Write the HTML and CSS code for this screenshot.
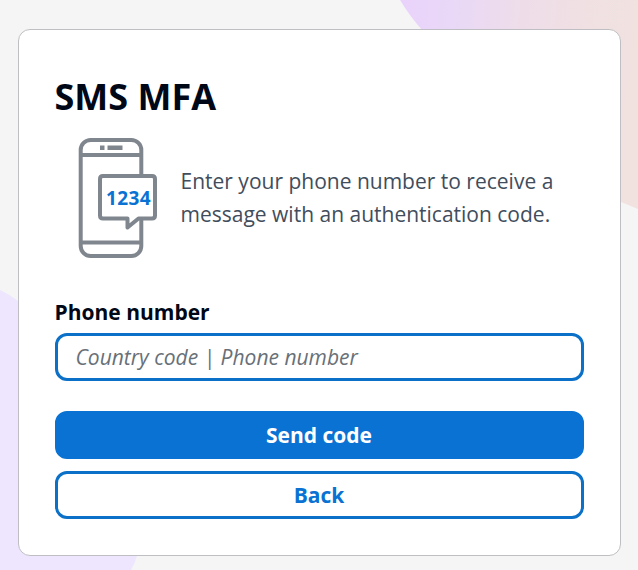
FILE: index.html
```html
<!DOCTYPE html>
<html lang="en">
<head>
<meta charset="utf-8">
<title>SMS MFA</title>
<link rel="stylesheet" href="styles.css">
</head>
<body>
<svg class="backdrop" viewBox="0 0 638 570" aria-hidden="true">
  <defs>
    <linearGradient id="glow" gradientUnits="userSpaceOnUse" x1="405" y1="0" x2="638" y2="20">
      <stop offset="0" stop-color="#ead3fb"/>
      <stop offset=".2" stop-color="#e9d8f7"/>
      <stop offset=".5" stop-color="#eedde9"/>
      <stop offset=".75" stop-color="#f0e0e3"/>
      <stop offset="1" stop-color="#f1e2e0"/>
    </linearGradient>
  </defs>
  <path fill="url(#glow)" d="M400 0Q409 15 422 30Q510 150 621 202L638 209V0Z"/>
  <path fill="#eee6fe" d="M0 290Q9 294 18 301C110 360 164 460 137 556Q135 563 131 570H0Z"/>
</svg>
<main class="card">
  <h1 class="title">SMS MFA</h1>
  <div class="intro">
    <svg class="phone" viewBox="0 0 80 122" aria-hidden="true">
      <g fill="none" stroke="#80868e" stroke-width="4" stroke-linejoin="round">
        <rect x="2.700" y="3" width="60.600" height="116" rx="10"/>
        <path d="M3 18H63M3 105.500H63"/>
        <path fill="#fff" d="M25 39H74Q77 39 77 42V78.500Q77 81.500 74 81.500H60.500L49.500 90.500V81.500H25Q22 81.500 22 78.500V42Q22 39 25 39Z"/>
      </g>
      <path fill="#80868e" d="M22 8.500H26.500V13H22ZM29.500 8.500H44.500V13H29.500Z"/>
      <text class="digits" x="28" y="67.500">1234</text>
    </svg>
    <p class="copy">Enter your phone number to receive a message with an authentication code.</p>
  </div>
  <label class="label" for="phone">Phone number</label>
  <input class="field" id="phone" type="tel" placeholder="Country code | Phone number">
  <button class="button primary" type="button">Send code</button>
  <button class="button" type="button">Back</button>
</main>
</body>
</html>
```
FILE: styles.css
```css
* { box-sizing: border-box; }
body {
  margin: 0;
  height: 570px;
  padding: 29px 17px 0 18px;
  overflow: hidden;
  background: #f5f5f5;
  font-family: "Open Sans", "Noto Sans", sans-serif;
  color: #000716;
}
.backdrop {
  position: absolute;
  inset: 0;
  width: 638px;
  height: 570px;
  z-index: -1;
}
.card {
  display: flex;
  flex-direction: column;
  height: 527px;
  padding: 42px 36px 0;
  background: #fff;
  border: 1px solid #bfbfc3;
  border-radius: 12px;
}
.title {
  margin: 0 0 0 -0.5px;
  font-size: 36px;
  line-height: 50px;
  font-weight: 700;
}
.intro {
  display: flex;
  align-items: center;
  height: 122px;
  margin-top: 15px;
}
.phone {
  flex: none;
  width: 80px;
  height: 122px;
  margin-left: 23px;
}
.digits {
  font-size: 19px;
  font-weight: 700;
  letter-spacing: 0.4px;
  fill: #0972d3;
}
.copy {
  width: 390px;
  margin: 0 0 0 22.5px;
  font-size: 21px;
  line-height: 33px;
  color: #414d5c;
}
.label {
  margin: 38px 0 0 -0.5px;
  font-size: 21px;
  line-height: 30px;
  font-weight: 700;
}
.field {
  height: 48px;
  margin: 6px 0 30px;
  padding: 0 17.5px;
  border: 3px solid #0b70c8;
  border-radius: 12px;
  background: #fff;
  font: 21px "Open Sans", "Noto Sans", sans-serif;
  outline: none;
}
.field::placeholder {
  color: #687078;
  font-style: italic;
  opacity: 1;
}
.button {
  height: 48px;
  padding: 0 1px 0 0;
  border: 3px solid #0b70c8;
  border-radius: 12px;
  background: #fff;
  color: #0972d3;
  font: 700 21px "Open Sans", "Noto Sans", sans-serif;
}
.primary {
  margin-bottom: 12px;
  border-color: #0972d3;
  background: #0972d3;
  color: #fff;
}
```
